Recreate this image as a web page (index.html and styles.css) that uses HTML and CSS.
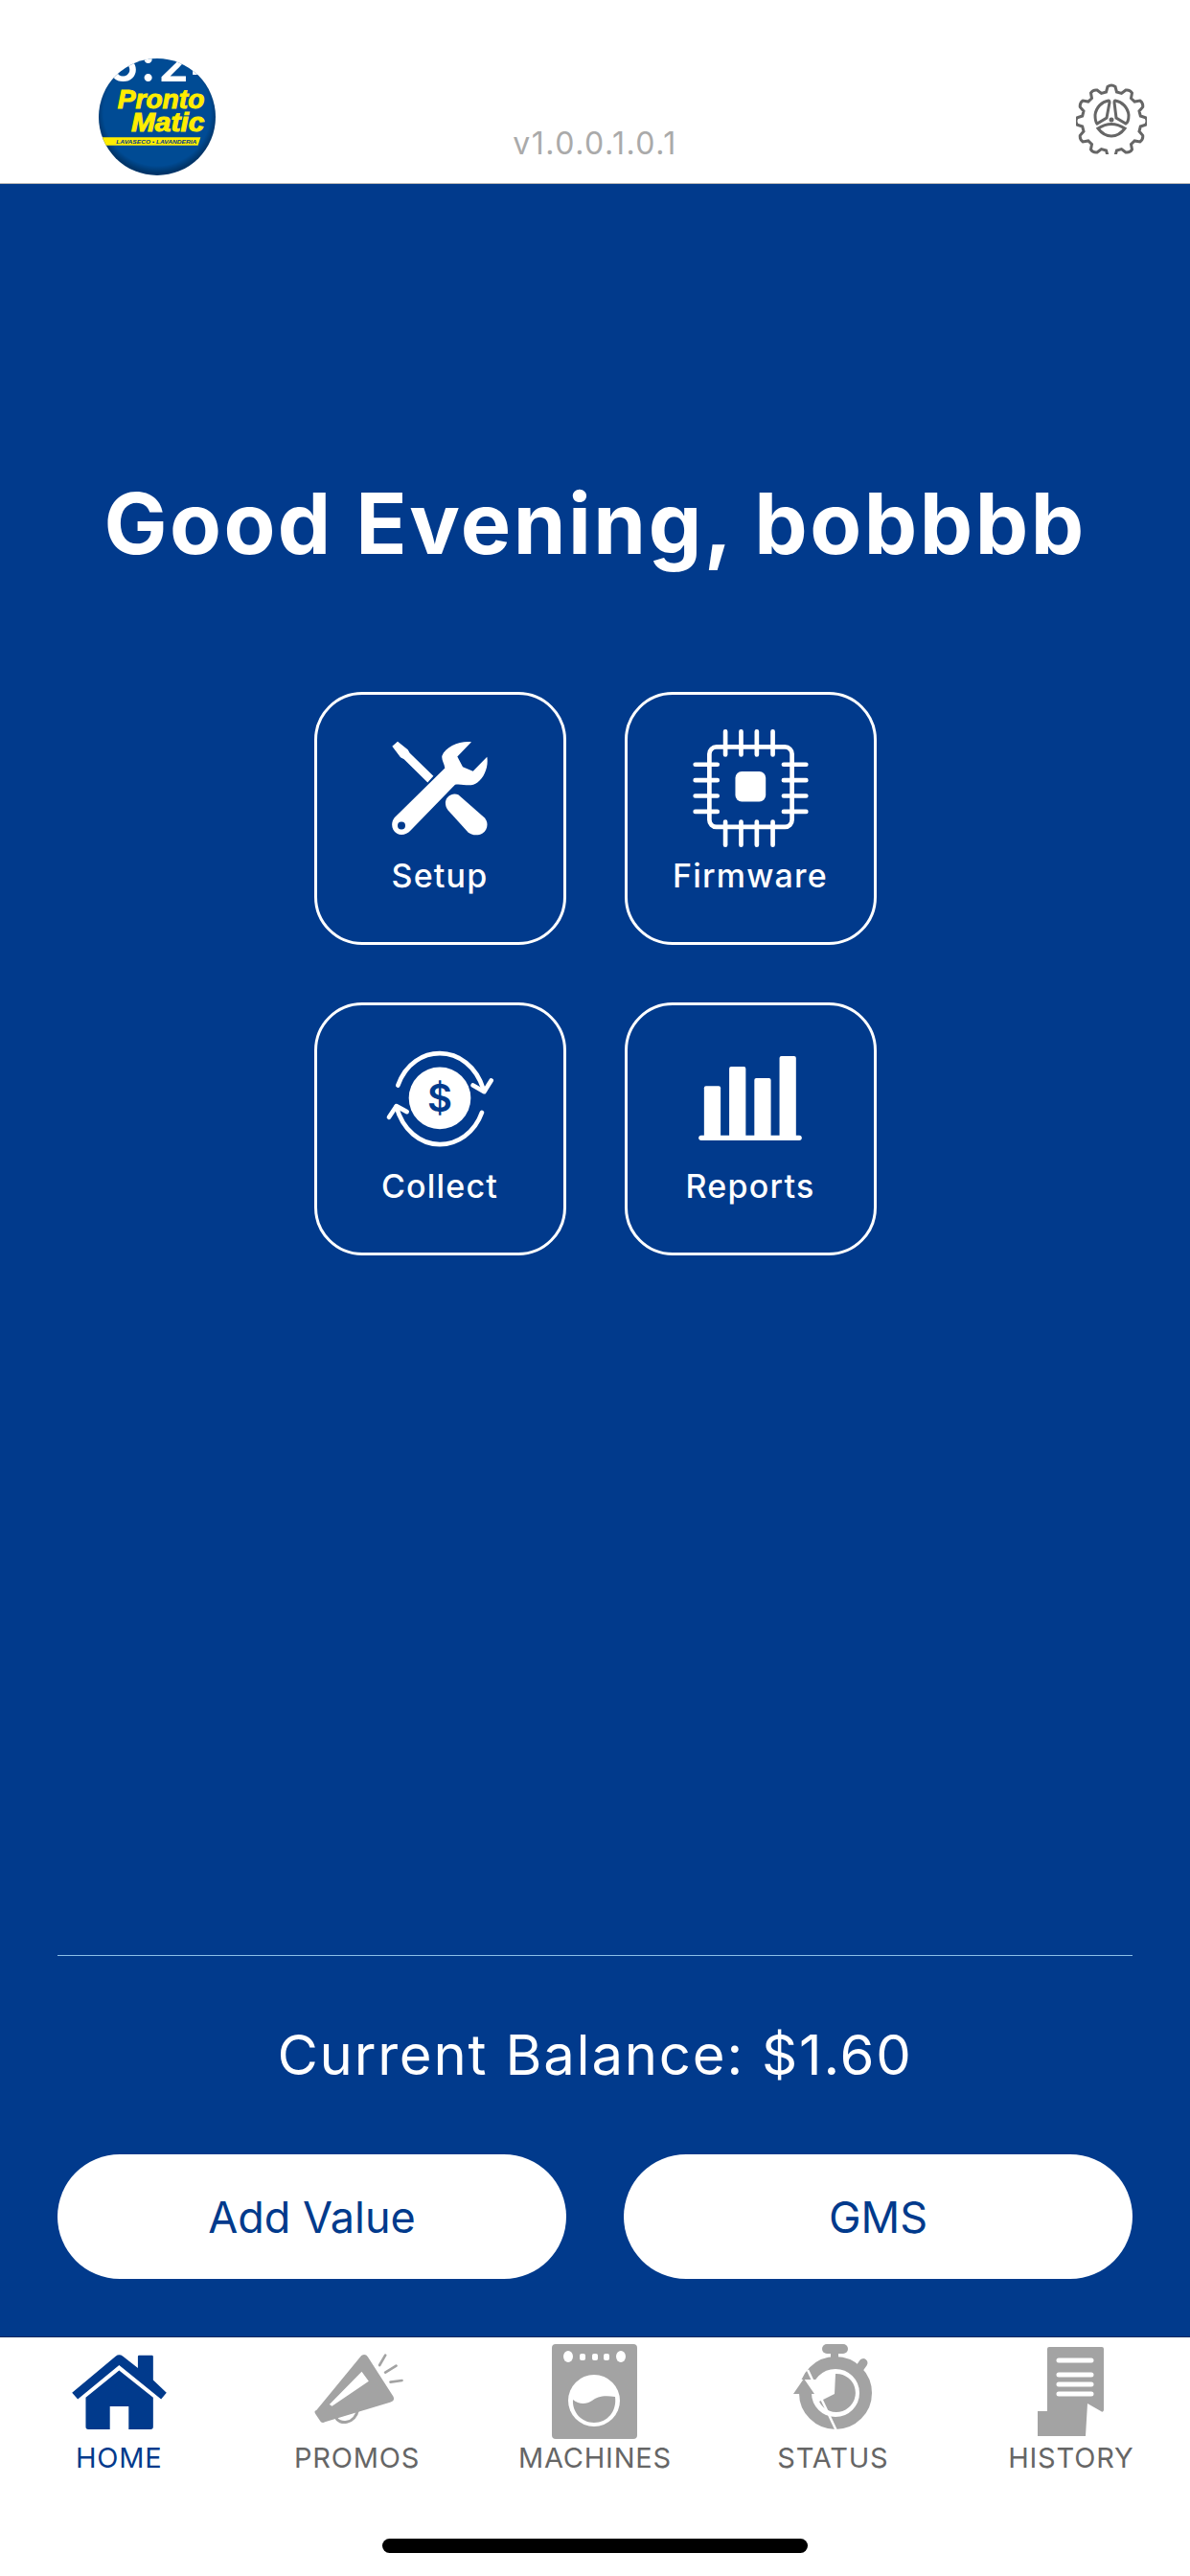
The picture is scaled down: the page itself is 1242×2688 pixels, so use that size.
FILE: index.html
```html
<!DOCTYPE html>
<html lang="en">
<head>
    <meta charset="UTF-8">
    <title>Pronto Matic</title>
    <link rel="stylesheet" href="styles.css">
</head>
<body>
    <div class="app">
        <header class="topbar">
            <svg class="logo" viewBox="306 180 372 372" width="124" height="124">
                <defs>
                    <clipPath id="logoClip"><circle cx="492" cy="366" r="183"/></clipPath>
                    <radialGradient id="logoFill" cx="50%" cy="46%" r="52%">
                        <stop offset="88%" stop-color="#004b94"/>
                        <stop offset="100%" stop-color="#003468"/>
                    </radialGradient>
                </defs>
                <circle cx="492" cy="366" r="183" fill="url(#logoFill)"/>
                <g clip-path="url(#logoClip)">
                    <text class="logo-time" x="335" y="255">6:24</text>
                    <text class="logo-name" x="368" y="340" textLength="272" lengthAdjust="spacingAndGlyphs">Pronto</text>
                    <text class="logo-name" x="411" y="412" textLength="229" lengthAdjust="spacingAndGlyphs">Matic</text>
                    <polygon points="300,430 628,430 620,455 300,455" fill="#ffed00"/>
                    <text class="logo-sub" x="364" y="449" textLength="252" lengthAdjust="spacingAndGlyphs">LAVASECO • LAVANDERIA</text>
                </g>
            </svg>
            <div class="version">v1.0.0.1.0.1</div>
            <svg class="gear" viewBox="0 0 74 74" width="74" height="74" fill="none" stroke="#666" stroke-width="3">
                <path d="M33 3.5q4-3 8 0l1.500 5.500 5 1.400 4.500-3.400q4.500-.5 6.500 3l-1 5.500 3.700 3.600 5.600-1q3.500 2.400 2.900 6.600l-3.700 4.300 1.300 5 5.400 1.800q2.700 3.200 0 7.400l-5.400 1.800-1.300 5 3.700 4.300q.6 4.200-2.900 6.600l-5.600-1-3.700 3.600 1 5.500q-2 3.500-6.500 3l-4.500-3.400-5 1.400-1.500 5.500q-4 3-8 0l-1.500-5.500-5-1.400-4.500 3.400q-4.500.5-6.500-3l1-5.500-3.700-3.600-5.600 1q-3.500-2.400-2.900-6.600l3.700-4.300-1.300-5-5.400-1.800q-2.700-4.200 0-7.400l5.400-1.800 1.300-5-3.700-4.300q-.6-4.200 2.900-6.600l5.600 1 3.700-3.600-1-5.500q2-3.500 6.500-3l4.500 3.400 5-1.400z"/>
                <path d="M34 18c-7 1-13 7-14 15 0 4 1 8 2 9l10-6 3-16q0-2-1-2z"/>
                <path d="M41 18c7 1 13 7 14 15 0 4-1 8-3 9l-10-6-2-16q0-2 1-2z"/>
                <path d="M23 47q14-9 28 0-6 8-14 8t-14-8z"/>
                <circle cx="37" cy="38" r="2.500" fill="#666" stroke="none"/>
            </svg>
        </header>

        <main class="home">
            <h1 class="greeting">Good Evening, bobbbb</h1>

            <div class="tiles">
                <a class="tile">
                    <span class="tile-icon">
                        <svg viewBox="302 215 300 296" width="100" height="99" fill="#fff">
                            <path d="M303 232 320 217 352 242 358 253 432 325 414 345 340 272 329 266z"/>
                            <path d="M551 218C515 214 470 232 459 262 457 275 466 285 468 300L310 455C298 470 300 495 318 505 332 513 350 507 360 496L500 352C520 347 550 362 570 345 592 328 605 295 600 265L556 310 524 296 507 264z"/>
                            <path d="M470 405C472 390 490 375 510 383L592 455C606 470 602 495 585 505 570 513 550 510 540 500L478 432C472 425 469 415 470 405z"/>
                            <circle cx="332" cy="480" r="12" fill="#013a8c"/>
                        </svg>
                    </span>
                    <span class="tile-label">Setup</span>
                </a>
                <a class="tile">
                    <span class="tile-icon">
                        <svg viewBox="272 176 374 374" width="125" height="125" fill="none" stroke="#fff" stroke-width="14" stroke-linecap="round">
                            <rect x="330" y="234" width="258" height="250" rx="22"/>
                            <path d="M380 186V258M429 186V258M478 186V258M528 186V258M380 468V540M429 468V540M478 468V540M528 468V540"/>
                            <path d="M286 289H355M286 338H355M286 387H355M286 436H355M562 289H632M562 338H632M562 387H632M562 436H632"/>
                            <rect x="411" y="311" width="95" height="94" rx="20" fill="#fff" stroke="none"/>
                        </svg>
                    </span>
                    <span class="tile-label">Firmware</span>
                </a>
                <a class="tile">
                    <span class="tile-icon">
                        <svg viewBox="280 190 342 314" width="114" height="105" fill="none" stroke="#fff" stroke-width="14" stroke-linecap="round" stroke-linejoin="round">
                            <circle cx="451" cy="345" r="97" fill="#fff" stroke="none"/>
                            <text class="dollar" x="451" y="388" text-anchor="middle">$</text>
                            <path d="M320 305C345 235 400 205 451 205 510 205 565 245 588 318"/>
                            <path d="M555 305 590 325 612 290"/>
                            <path d="M583 390C560 455 505 490 451 490 390 490 335 445 315 372"/>
                            <path d="M292 405 315 370 348 388"/>
                        </svg>
                    </span>
                    <span class="tile-label">Collect</span>
                </a>
                <a class="tile">
                    <span class="tile-icon">
                        <svg viewBox="297 217 324 265" width="108" height="88" fill="#fff">
                            <rect x="314" y="311" width="52" height="165" rx="6"/>
                            <rect x="393" y="250" width="52" height="226" rx="6"/>
                            <rect x="472" y="286" width="52" height="190" rx="6"/>
                            <rect x="551" y="217" width="52" height="259" rx="6"/>
                            <rect x="297" y="466" width="324" height="16" rx="8"/>
                        </svg>
                    </span>
                    <span class="tile-label">Reports</span>
                </a>
            </div>

            <div class="bottom">
                <div class="balance">Current Balance: $1.60</div>
                <div class="actions">
                    <button class="pill">Add Value</button>
                    <button class="pill">GMS</button>
                </div>
            </div>
        </main>

        <nav class="tabs">
            <a class="tab active">
                <span class="tab-icon">
                    <svg viewBox="225 110 297 235" width="99" height="78" fill="#013a8c">
                        <path d="M225 230 362 115Q373 106 385 115L432 152V116Q432 112 436 112H476Q480 112 480 116V190L522 230 505 250 373 143 243 250z"/>
                        <path d="M268 245 373 160 480 245V337Q480 345 472 345H403V273H344V345H276Q268 345 268 337z"/>
                    </svg>
                </span>
                <span class="tab-label">HOME</span>
            </a>
            <a class="tab">
                <span class="tab-icon">
                    <svg viewBox="970 106 296 240" width="99" height="80" fill="#a3a3a3">
                        <path d="M1132 112Q1145 105 1152 116L1232 240Q1238 254 1222 258L1018 320Q1010 325 1004 318L988 294Q982 286 992 282z M1133 162 1032 265 1040 270 1155 192z" fill-rule="evenodd"/>
                        <path d="M1052 306C1062 328 1110 330 1122 280" fill="none" stroke="#a3a3a3" stroke-width="9"/>
                        <path d="M1189 142 1207 111M1207 165 1241 144M1223 195 1259 190" fill="none" stroke="#a3a3a3" stroke-width="8" stroke-linecap="round"/>
                    </svg>
                </span>
                <span class="tab-label">PROMOS</span>
            </a>
            <a class="tab">
                <span class="tab-icon">
                    <svg viewBox="0 0 89 99" width="89" height="99">
                        <rect width="89" height="99" rx="4" fill="#a3a3a3"/>
                        <ellipse cx="17" cy="13" rx="5" ry="6" fill="#fff"/>
                        <rect x="29" y="10" width="6" height="7" rx="2" fill="#fff"/>
                        <rect x="42" y="10" width="6" height="7" rx="2" fill="#fff"/>
                        <rect x="54" y="10" width="6" height="7" rx="2" fill="#fff"/>
                        <ellipse cx="72" cy="13" rx="5" ry="6" fill="#fff"/>
                        <circle cx="44" cy="59" r="27" fill="#fff"/>
                        <path d="M22 58C28 63 36 63 42 59 47 55 54 53 66 55 68 70 58 82 44 82 31 82 21 71 22 58z" fill="#a3a3a3"/>
                    </svg>
                </span>
                <span class="tab-label">MACHINES</span>
            </a>
            <a class="tab">
                <span class="tab-icon">
                    <svg viewBox="0 0 82 99" width="82" height="99">
                        <rect x="30" y="0" width="27" height="10" rx="5" fill="#a3a3a3"/>
                        <rect x="39" y="8" width="8" height="10" fill="#a3a3a3"/>
                        <rect x="66" y="14" width="9" height="18" rx="4.500" fill="#a3a3a3" transform="rotate(35 70 23)"/>
                        <circle cx="44" cy="51" r="31.500" fill="none" stroke="#a3a3a3" stroke-width="13"/>
                        <path d="M44 31A20 20 0 1 1 27 60L43 52z" fill="#a3a3a3"/>
                        <path d="M10 37H0V52H23V37z" fill="#fff"/>
                        <path d="M11 36 0 52H22z" fill="#a3a3a3"/>
                        <path d="M15 27 49 99" stroke="#fff" stroke-width="2.500"/>
                    </svg>
                </span>
                <span class="tab-label">STATUS</span>
            </a>
            <a class="tab">
                <span class="tab-icon">
                    <svg viewBox="0 0 69 93" width="69" height="93">
                        <path d="M10 2Q10 0 12 0H67Q69 0 69 2V66Q68 69 66 67L52 59 50 93H0V67H10z" fill="#a3a3a3"/>
                        <path d="M22 14H56M22 29H56M22 39H56M22 49H56" stroke="#fff" stroke-width="5" stroke-linecap="round"/>
                    </svg>
                </span>
                <span class="tab-label">HISTORY</span>
            </a>
        </nav>

        <div class="home-bar"></div>
    </div>
</body>
</html>
```

FILE: styles.css
```css
* {
    box-sizing: border-box;
}
body {
    margin: 0;
    font-family: Inter, "Noto Sans", sans-serif;
    background-color: #fff;
}
.app {
    width: 1242px;
    height: 2688px;
    display: flex;
    flex-direction: column;
    overflow: hidden;
}

/* top bar */
.topbar {
    height: 192px;
    flex: none;
    display: grid;
    grid-template-columns: 1fr auto 1fr;
    align-items: start;
    padding: 0 45px;
    border-bottom: 1px solid #b5b5b5;
}
.logo {
    margin: 60px 0 0 57px;
}
.logo-time {
    font-family: Inter, sans-serif;
    font-size: 153px;
    font-weight: 600;
    letter-spacing: 7px;
    fill: #fff;
}
.logo-name {
    font-family: "Liberation Sans", sans-serif;
    font-size: 82px;
    font-weight: 700;
    font-style: italic;
    fill: #ffed00;
    stroke: #ffed00;
    stroke-width: 3px;
}
.logo-sub {
    font-family: "Liberation Sans", sans-serif;
    font-size: 18px;
    font-weight: 700;
    font-style: italic;
    fill: #013a8c;
}
.version {
    margin-top: 126px;
    font-size: 32px;
    line-height: 48px;
    letter-spacing: 1.5px;
    color: #aaa;
}
.gear {
    justify-self: end;
    margin-top: 87px;
}

/* blue area */
.home {
    flex: 1;
    display: flex;
    flex-direction: column;
    background-color: #013a8c;
    border-bottom: 1px solid #00275f;
}
.greeting {
    margin: 304px 0 0;
    font-size: 88px;
    line-height: 100px;
    font-weight: 700;
    letter-spacing: 2.5px;
    color: #fff;
    text-align: center;
}
.tiles {
    margin: 126px auto 0;
    display: grid;
    grid-template-columns: 263px 263px;
    grid-auto-rows: 264px;
    gap: 60px 61px;
}
.tile {
    display: flex;
    flex-direction: column;
    align-items: center;
    padding-top: 35px;
    border: 3px solid #fff;
    border-radius: 50px;
    color: #fff;
}
.tile-icon {
    height: 124px;
    display: flex;
    align-items: center;
    justify-content: center;
}
.tile-label {
    margin-top: 10px;
    font-size: 34px;
    line-height: 40px;
    font-weight: 500;
    letter-spacing: 1.2px;
}
.dollar {
    font-family: Inter, sans-serif;
    font-size: 120px;
    font-weight: 600;
    fill: #013a8c;
    stroke: none;
}
.bottom {
    margin: auto 60px 0;
    padding: 68px 0 60px;
    border-top: 1px solid #8cc0e8;
}
.balance {
    font-size: 58px;
    line-height: 70px;
    letter-spacing: 1.8px;
    color: #fff;
    text-align: center;
}
.actions {
    margin-top: 69px;
    display: grid;
    grid-template-columns: 1fr 1fr;
    gap: 60px;
}
.pill {
    height: 130px;
    border: none;
    border-radius: 65px;
    background-color: #fff;
    color: #013a8c;
    font-family: inherit;
    font-size: 45px;
}

/* tab bar */
.tabs {
    flex: none;
    display: grid;
    grid-template-columns: repeat(5, 1fr);
    padding-top: 5px;
}
.tab {
    display: flex;
    flex-direction: column;
    align-items: center;
    color: #666;
}
.tab.active {
    color: #013a8c;
}
.tab-icon {
    height: 103px;
    display: flex;
    align-items: center;
}
.tab-label {
    font-size: 29px;
    line-height: 36px;
    letter-spacing: .8px;
}
.home-bar {
    width: 444px;
    height: 15px;
    margin: 66px auto 24px;
    flex: none;
    border-radius: 8px;
    background-color: #000;
}
```
